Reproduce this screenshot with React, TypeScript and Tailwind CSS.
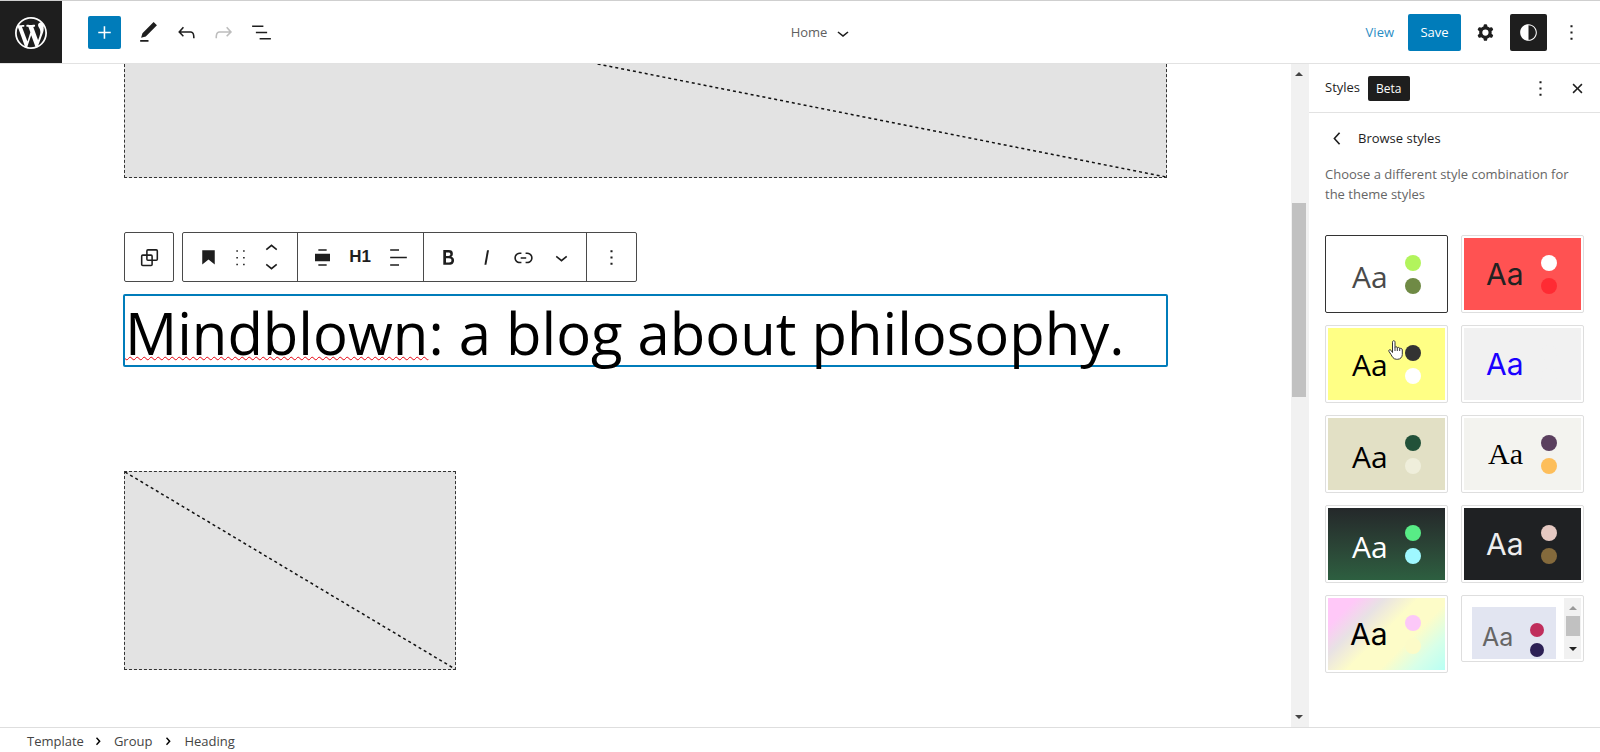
import React from 'react'

type IconProps = { d: string; className?: string }

function Icon({ d, className = 'size-[25px]' }: IconProps) {
    return (
        <svg viewBox="0 0 24 24" className={className} fill="currentColor" fillRule="evenodd" aria-hidden="true">
            <path d={d} />
        </svg>
    )
}

const icons = {
    plus: 'M11.2 12.7v5.3h1.5v-5.3H18v-1.5h-5.3V6h-1.5v5.2H6v1.5h5.2z',
    pencil: 'M20.1 5.1L16.9 2 6.2 12.7l-1.3 4.4 4.5-1.3L20.1 5.1zM4 20.8h8v-1.5H4v1.5z',
    undo: 'M18.3 11.7c-.6-.6-1.4-.9-2.3-.9H6.7l2.9-3.3-1.1-1-4.5 5L8.5 16l1-1-2.7-2.7H16c.5 0 .9.2 1.3.5 1 1 1 3.4 1 4.5v.3h1.5v-.2c0-1.5 0-4.3-1.5-5.7z',
    redo: 'M15.6 6.5l-1.1 1 2.9 3.3H8c-.9 0-1.7.3-2.3.9-1.4 1.5-1.4 4.2-1.4 5.6v.2h1.5v-.3c0-1.1 0-3.5 1-4.5.3-.3.7-.5 1.3-.5h9.2L14.5 15l1.1 1.1 4.6-4.6-4.6-5z',
    listView: 'M13.8 5.2H3v1.5h10.8V5.2zm-3.6 12v1.5H21v-1.5H10.2zm7.2-6H6.6v1.5h10.8v-1.5z',
    chevronDown: 'M17.5 11.6L12 16l-5.5-4.4.9-1.2L12 14l4.5-3.6 1 1.2z',
    chevronUp: 'M6.5 12.4L12 8l5.5 4.4-.9 1.2L12 10l-4.5 3.6-1-1.2z',
    chevronLeft: 'M14.6 7l-1.2-1L8 12l5.4 6 1.2-1-4.6-5z',
    crumb: 'M9 6.5L10.5 5l5.5 6-5.5 6L9 15.5l4-4.5z',
    more: 'M13 19h-2v-2h2v2zm0-6h-2v-2h2v2zm0-6h-2V5h2v2z',
    cog: 'M10.289 4.836A1 1 0 0111.275 4h1.306a1 1 0 01.987.836l.244 1.466c.787.26 1.503.679 2.108 1.218l1.393-.522a1 1 0 011.216.437l.653 1.13a1 1 0 01-.23 1.273l-1.148.944a6.025 6.025 0 010 2.435l1.149.946a1 1 0 01.23 1.272l-.653 1.13a1 1 0 01-1.216.437l-1.394-.522c-.605.54-1.32.958-2.108 1.218l-.244 1.466a1 1 0 01-.987.836h-1.306a1 1 0 01-.986-.836l-.244-1.466a5.995 5.995 0 01-2.108-1.218l-1.394.522a1 1 0 01-1.217-.436l-.653-1.131a1 1 0 01.23-1.272l1.149-.946a6.026 6.026 0 010-2.435l-1.148-.944a1 1 0 01-.23-1.272l.653-1.131a1 1 0 011.217-.437l1.393.522a5.994 5.994 0 012.108-1.218l.244-1.466zM14.929 12a3 3 0 11-6 0 3 3 0 016 0z',
    contrast: 'M12 4c-4.4 0-8 3.6-8 8s3.6 8 8 8 8-3.6 8-8-3.6-8-8-8zm0 15V5c3.9 0 7 3.1 7 7s-3.1 7-7 7z',
    close: 'M12 13.06l3.712 3.713 1.061-1.06L13.061 12l3.712-3.712-1.06-1.06L12 10.938 8.288 7.227l-1.061 1.06L10.939 12l-3.712 3.712 1.06 1.061L12 13.061z',
    bookmark: 'M6 5v13.6l6-4.8 6 4.8V5H6z',
    drag: 'M8 6.500h1.500V5H8v1.500zm0 6.500h1.500v-1.500H8V13zm0 6.500h1.500V18H8v1.500zM14.500 5v1.500H16V5h-1.500zm0 8H16v-1.500h-1.500V13zm0 6.500H16V18h-1.500v1.500z',
    alignWide: 'M8 4h8v1.5H8V4zM4.8 8.5h14.4v7H4.800v-7zM8 18.5h8V20H8v-1.5z',
    alignLeft: 'M12.500 5.500H4V4h8.500v1.500zm7.500 7.250H4v-1.500h16v1.500zM12.500 20H4v-1.500h8.500V20z',
    bold: 'M14.7 11.3c1-.6 1.5-1.6 1.5-3 0-2.3-1.3-3.4-4-3.4H7v14h5.8c1.4 0 2.5-.3 3.3-1 .8-.7 1.2-1.7 1.2-2.9.1-1.9-.8-3.1-2.6-3.7zm-5.1-4h2.3c.6 0 1.1.1 1.4.4.3.3.5.7.5 1.2s-.2 1-.5 1.2c-.3.3-.8.4-1.4.4H9.6V7.3zm4.6 9c-.4.3-1 .4-1.7.4H9.6v-3.9h2.9c.7 0 1.3.2 1.7.5.4.3.6.8.6 1.5s-.2 1.2-.6 1.5z',
    italic: 'M12.5 5L10 19h1.9l2.5-14z',
    link: 'M15.6 7.2H14v1.5h1.6c2 0 3.7 1.7 3.7 3.7s-1.7 3.7-3.7 3.7H14v1.5h1.6c2.8 0 5.2-2.3 5.2-5.2 0-2.9-2.3-5.2-5.2-5.2zM4.7 12.4c0-2 1.7-3.7 3.7-3.7H10V7.2H8.4c-2.9 0-5.2 2.3-5.2 5.2 0 2.9 2.3 5.2 5.2 5.2H10v-1.5H8.4c-2 0-3.7-1.7-3.7-3.7zm4.6.9h5.3v-1.5H9.3v1.5z',
    wordpress: 'M20 10c0-5.51-4.49-10-10-10C4.48 0 0 4.49 0 10c0 5.52 4.48 10 10 10 5.51 0 10-4.48 10-10zM7.78 15.37L4.37 6.22c.55-.02 1.17-.08 1.17-.08.5-.06.44-1.13-.06-1.11 0 0-1.45.11-2.37.11-.18 0-.37 0-.58-.01C4.12 2.69 6.87 1.11 10 1.11c2.33 0 4.45.87 6.05 2.34-.68-.11-1.65.39-1.65 1.58 0 .74.45 1.36.9 2.1.35.61.55 1.36.55 2.46 0 1.49-1.4 5-1.4 5l-3.03-8.37c.54-.02.82-.17.82-.17.5-.05.44-1.25-.06-1.22 0 0-1.44.12-2.38.12-.87 0-2.33-.12-2.33-.12-.5-.03-.56 1.2-.06 1.22l.92.08 1.26 3.41zM17.41 10c.24-.64.74-1.87.43-4.25.7 1.29 1.05 2.71 1.05 4.25 0 3.29-1.73 6.24-4.4 7.78.97-2.59 1.94-5.2 2.92-7.78zM6.1 18.09C3.12 16.65 1.11 13.53 1.11 10c0-1.3.23-2.48.72-3.59C3.25 10.3 4.67 14.2 6.1 18.09zm4.03-6.63l2.58 6.98c-.86.29-1.76.45-2.71.45-.79 0-1.57-.11-2.29-.33.81-2.38 1.62-4.74 2.42-7.1z',
}

function IconButton({ label, d, className = 'w-[38px] h-[37px]' }: { label: string; d: string; className?: string }) {
    return (
        <button aria-label={label} className={`flex items-center justify-center ${className}`}>
            <Icon d={d} />
        </button>
    )
}

function Header() {
    return (
        <header className="flex h-16 shrink-0 items-center border-t border-b border-t-[#cfcfcf] border-b-[#e2e2e2]">
            <button aria-label="WordPress" className="flex h-full w-[62px] items-center justify-center bg-[#1e1e1e] pt-0.5 text-white">
                <svg viewBox="0 0 20 20" className="size-8" fill="currentColor" aria-hidden="true">
                    <path d={icons.wordpress} />
                </svg>
            </button>
            <div className="flex flex-1 items-center pl-[26px]">
                <IconButton label="Add block" d={icons.plus} className="mr-2 size-[33px] rounded-xs bg-[#007cba] text-white" />
                <IconButton label="Tools" d={icons.pencil} />
                <IconButton label="Undo" d={icons.undo} />
                <button aria-label="Redo" disabled className="flex h-[37px] w-[37px] items-center justify-center text-[#bdbdbd]">
                    <Icon d={icons.redo} />
                </button>
                <IconButton label="List view" d={icons.listView} />
            </div>
            <button className="mr-8 flex items-center gap-1 pt-0.5 text-[13px] text-[#606060]">
                Home
                <Icon d={icons.chevronDown} className="size-6 text-[#1e1e1e]" />
            </button>
            <div className="flex flex-1 items-center justify-end gap-1.5 pr-2.5">
                <a href="#view" className="mr-2 pt-0.5 text-[13px] text-[#2b8dc4]">View</a>
                <button className="h-[37px] w-[53px] rounded-xs bg-[#007cba] pt-0.5 text-[13px] font-medium text-white">Save</button>
                <IconButton label="Settings" d={icons.cog} className="size-[37px]" />
                <IconButton label="Styles" d={icons.contrast} className="size-[37px] rounded-xs bg-[#1e1e1e] text-white" />
                <IconButton label="Options" d={icons.more} className="size-[37px]" />
            </div>
        </header>
    )
}

function BlockToolbar() {
    return (
        <div className="mt-[54px] flex gap-2 text-[#1e1e1e]">
            <button aria-label="Select parent block" className="flex size-[50px] items-center justify-center rounded-xs border border-[#4a4a4a]">
                <svg viewBox="0 0 24 24" className="size-[25px]" fill="none" stroke="currentColor" strokeWidth="1.500" aria-hidden="true">
                    <rect x="9.500" y="4.700" width="10" height="10" rx="1" />
                    <rect x="4.500" y="9.700" width="10" height="10" rx="1" />
                </svg>
            </button>
            <div role="toolbar" aria-label="Block tools" className="flex h-[50px] items-center rounded-xs border border-[#4a4a4a]">
                <div className="flex h-full items-center border-r border-[#4a4a4a] pr-2 pl-1.5">
                    <IconButton label="Heading" d={icons.bookmark} />
                    <IconButton label="Drag" d={icons.drag} className="h-[37px] w-[26px]" />
                    <div className="flex w-9 flex-col items-center">
                        <button aria-label="Move up" className="flex h-[17px] items-center">
                            <Icon d={icons.chevronUp} />
                        </button>
                        <button aria-label="Move down" className="flex h-[17px] items-center">
                            <Icon d={icons.chevronDown} />
                        </button>
                    </div>
                </div>
                <div className="flex h-full items-center border-r border-[#4a4a4a] px-1.5">
                    <IconButton label="Align" d={icons.alignWide} className="size-[37px]" />
                    <button className="h-[37px] w-[38px] font-['Liberation_Sans',sans-serif] text-[17px] font-bold">H1</button>
                    <IconButton label="Align text" d={icons.alignLeft} />
                </div>
                <div className="flex h-full items-center border-r border-[#4a4a4a] px-1.5">
                    <IconButton label="Bold" d={icons.bold} className="size-[37px]" />
                    <IconButton label="Italic" d={icons.italic} />
                    <IconButton label="Link" d={icons.link} className="size-[37px]" />
                    <IconButton label="More" d={icons.chevronDown} />
                </div>
                <div className="px-1.5">
                    <IconButton label="Options" d={icons.more} className="size-[37px]" />
                </div>
            </div>
        </div>
    )
}

function Canvas() {
    return (
        <main className="min-w-0 flex-1 overflow-hidden px-[124px]">
            {/* featured image placeholder, scrolled under the header */}
            <div className="h-[114px] border border-t-0 border-dashed border-[#333] bg-[#e3e3e3]">
                <svg className="size-full" aria-hidden="true">
                    <line x1="45.4%" y1="0" x2="100%" y2="100%" stroke="#111" strokeWidth="1.500" strokeDasharray="3 3" />
                </svg>
            </div>
            <BlockToolbar />
            <h1 className="-mx-px mt-3 h-[73px] rounded-xs border-2 border-[#007cba] pt-1 text-[58px] leading-[65px] whitespace-nowrap text-black">
                <span className="underline decoration-red-600 decoration-wavy decoration-1 underline-offset-1">Mindblown</span>: a blog about philosophy.
            </h1>
            <div className="mt-[104px] h-[199px] w-[332px] border border-dashed border-[#333] bg-[#e3e3e3]">
                <svg className="size-full" aria-hidden="true">
                    <line x1="0" y1="0" x2="100%" y2="100%" stroke="#111" strokeWidth="1.500" strokeDasharray="3 3" />
                </svg>
            </div>
        </main>
    )
}

function Arrow({ up, className }: { up?: boolean; className: string }) {
    return (
        <svg viewBox="0 0 8 4" className={`h-1 w-2 ${className}`} fill="currentColor" aria-hidden="true">
            <path d={up ? 'M0 4l4-4 4 4z' : 'M0 0l4 4 4-4z'} />
        </svg>
    )
}

type StyleCard = { name: string; bg: string; text: string; top: string; bottom: string; active?: boolean; cursor?: boolean }

const cards: StyleCard[] = [
    { name: 'Default', bg: 'bg-white px-6', text: 'pt-1.5 text-[#4a4a4a]', top: 'bg-[#b2f45c]', bottom: 'bg-[#6f8a45]', active: true },
    { name: 'Red', bg: 'bg-[#ff5252] pl-[22px] pr-6', text: "font-['Inter'] text-[#222]", top: 'bg-white', bottom: 'bg-[#ff2b33]' },
    { name: 'Yellow', bg: 'bg-[#ffff85] px-6', text: 'pt-0.5 text-black', top: 'bg-[#333]', bottom: 'bg-white', cursor: true },
    { name: 'Blue', bg: 'bg-[#f1f1f1] pl-[22px] pr-6', text: "font-['Inter'] text-[#1a00ff]", top: 'bg-[#f1f1f1]', bottom: 'bg-[#f1f1f1]' },
    { name: 'Sand', bg: 'bg-[#e2e0c5] px-6', text: 'pt-1.5 text-black', top: 'bg-[#225139]', bottom: 'bg-[#efeedb]' },
    { name: 'Serif', bg: 'bg-[#f3f3ef] px-6', text: "font-['Liberation_Serif'] text-black", top: 'bg-[#5a3f5e]', bottom: 'bg-[#fdbe5a]' },
    { name: 'Forest', bg: 'bg-linear-to-b from-[#24282a] to-[#2d5f40] px-6', text: 'pt-1.5 text-white', top: 'bg-[#58ec86]', bottom: 'bg-[#9ff8ff]' },
    { name: 'Dark', bg: 'bg-[#1f2123] pl-[22px] pr-6', text: "font-['Inter'] text-[#eee]", top: 'bg-[#e5c9c2]', bottom: 'bg-[#846a3c]' },
    { name: 'Pastel', bg: 'bg-[linear-gradient(135deg,#ffc8f8_15%,#e8e2e4_30%,#fdfcc8_48%,#fdfcc8_65%,#d8ffe8_82%,#b8fff4_100%)] pl-[22px] pr-6', text: "font-['Inter'] text-black", top: 'bg-[#fcc8f8]', bottom: 'bg-[#fcfbc8]' },
]

function Card({ card }: { card: StyleCard }) {
    return (
        <button
            aria-label={card.name}
            className={`relative h-[78px] rounded-xs border p-0.5 ${card.active ? 'border-[#333]' : 'border-[#dedede]'}`}
        >
            <span className={`flex h-full items-center justify-between ${card.bg}`}>
                <span className={`text-[30px] leading-8 ${card.text}`}>Aa</span>
                <span className="flex flex-col gap-[7px]">
                    <span className={`size-4 rounded-full ${card.top}`} />
                    <span className={`size-4 rounded-full ${card.bottom}`} />
                </span>
            </span>
            {card.cursor && (
                <svg viewBox="0 0 15 20" className="absolute top-[14px] left-[62px] h-5 w-[15px]" fill="#fff" stroke="#333" aria-hidden="true">
                    <path d="M4.500 12.500V2.200C4.500.2 7 .2 7 2.200V7.500C7.300 6.300 9.300 6.500 9.300 8 9.800 7 11.700 7.200 11.700 8.700 12.300 8 14.300 8.200 14.300 10V14.500C14.300 17 12.500 19.300 9.500 19.300H8.500C5.500 19.300 4 16.500 3 14.500L1 11.500C.2 10 2 9 3 10.300Z" />
                    <path d="M7 7.500V11M9.300 8V11M11.700 8.700V11" fill="none" />
                </svg>
            )}
        </button>
    )
}

function Sidebar() {
    return (
        <aside className="w-[291px] shrink-0 text-[13px] text-[#1e1e1e]">
            <div className="flex h-[49px] items-center border-b border-[#e2e2e2] pl-4">
                <h2>Styles</h2>
                <span className="ml-2 rounded-xs bg-[#1e1e1e] px-2 text-[12px] leading-[25px] font-medium text-white">Beta</span>
                <div className="ml-auto flex pr-1">
                    <IconButton label="More styles actions" d={icons.more} />
                    <IconButton label="Close styles" d={icons.close} className="h-[37px] w-[37px]" />
                </div>
            </div>
            <div className="flex items-center gap-2 px-4 pt-[13px]">
                <IconButton label="Back" d={icons.chevronLeft} className="size-[25px]" />
                <h3>Browse styles</h3>
            </div>
            <p className="px-4 pt-[13px] leading-5 text-[#666]">Choose a different style combination for the theme styles</p>
            <div className="grid grid-cols-2 items-start gap-x-[13px] gap-y-3 px-4 pt-[31px]">
                {cards.map((card) => (
                    <Card key={card.name} card={card} />
                ))}
                <button aria-label="Lavender" className="flex h-[67px] justify-between rounded-xs border border-[#dedede] p-0.5">
                    <span className="mt-[9px] ml-2 flex h-[52px] w-[84px] items-center justify-between bg-[#e2e5f1] pr-3 pl-2.5">
                        <span className="pt-2 font-['Inter'] text-[25px] leading-7 text-[#666]">Aa</span>
                        <span className="flex flex-col gap-[6px] pt-3.5">
                            <span className="size-[14px] rounded-full bg-[#c02e5c]" />
                            <span className="size-[14px] rounded-full bg-[#2c2055]" />
                        </span>
                    </span>
                    <span className="flex h-full w-[17px] flex-col items-center bg-[#f1f1f1] py-2">
                        <Arrow up className="text-[#999]" />
                        <span className="mt-1.5 h-5 w-[14px] bg-[#c1c1c1]" />
                        <Arrow className="mt-auto text-[#222]" />
                    </span>
                </button>
            </div>
        </aside>
    )
}

function App() {
    return (
        <div className="flex h-screen flex-col overflow-hidden bg-white font-['Open_Sans',sans-serif] text-[#1e1e1e]">
            <Header />
            <div className="flex min-h-0 flex-1">
                <Canvas />
                <div className="flex w-[18px] shrink-0 flex-col items-center bg-[#f1f1f1] py-2 pr-0.5">
                    <Arrow up className="text-[#444]" />
                    <div className="mt-[127px] h-[194px] w-[14px] bg-[#c1c1c1]" />
                    <Arrow className="mt-auto text-[#444]" />
                </div>
                <Sidebar />
            </div>
            <footer className="h-[25px] shrink-0 border-t border-[#dedede] pl-[27px]">
                <nav aria-label="Block breadcrumb" className="flex h-7 items-center text-[13px] text-[#444]">
                    <a href="#template">Template</a>
                    <Icon d={icons.crumb} className="mr-2 ml-1.5 size-4 text-black" />
                    <a href="#group">Group</a>
                    <Icon d={icons.crumb} className="mx-2 size-4 text-black" />
                    <a href="#heading">Heading</a>
                </nav>
            </footer>
        </div>
    )
}

export default App
